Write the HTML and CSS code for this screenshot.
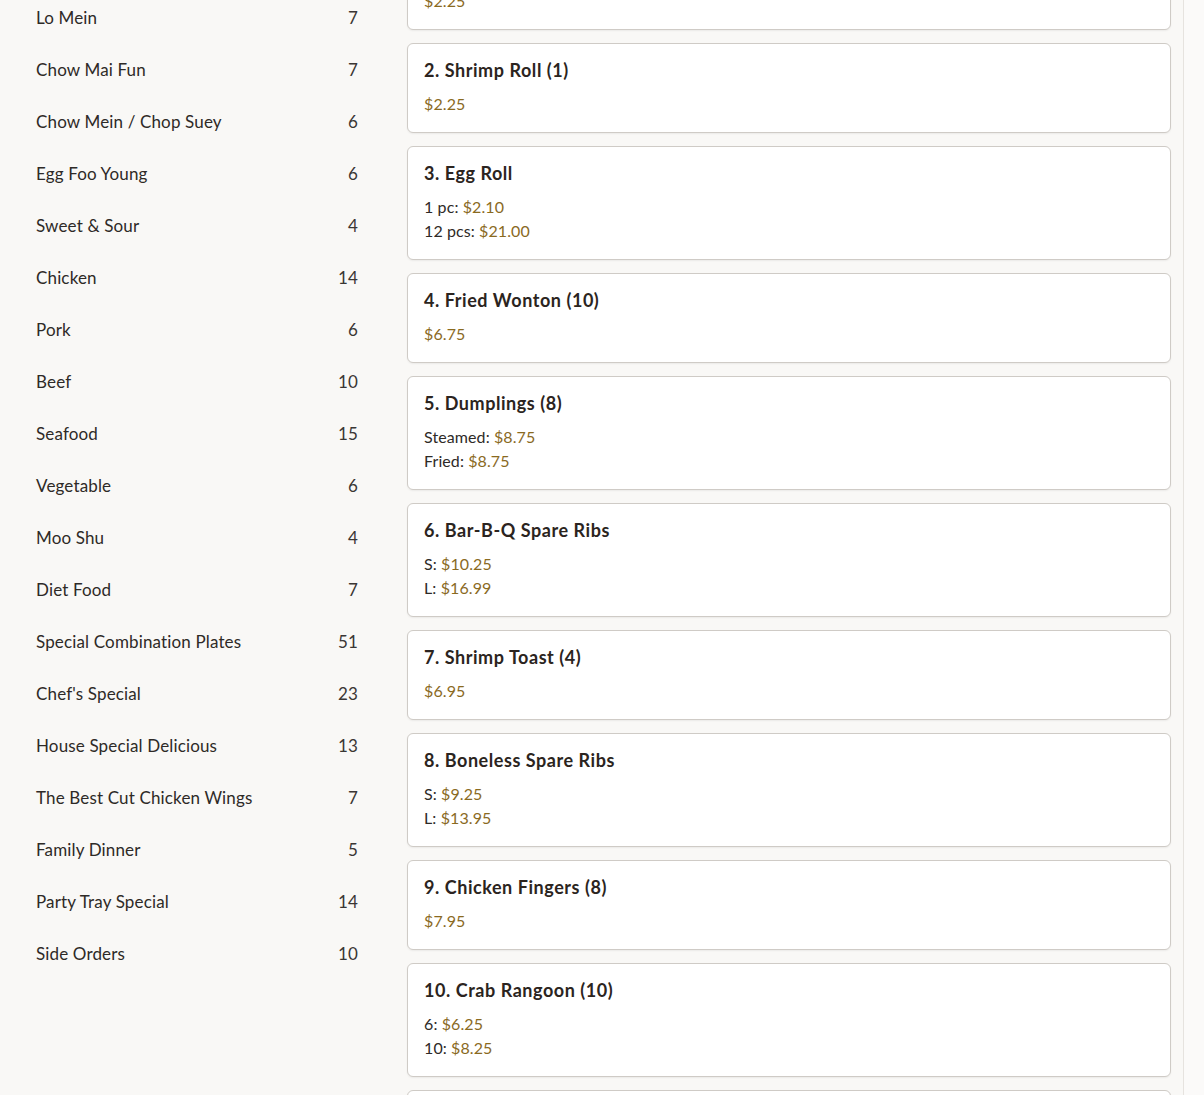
FILE: index.html
```html
<!DOCTYPE html>
<html lang="en">
<head>
<meta charset="utf-8">
<title>Menu</title>
<link rel="stylesheet" href="styles.css">
</head>
<body>
<div class="layout">
  <aside class="sidebar">
    <ul class="cats">
      <li class="cat"><span class="cat-name">Lo Mein</span><span class="cat-count">7</span></li>
      <li class="cat"><span class="cat-name">Chow Mai Fun</span><span class="cat-count">7</span></li>
      <li class="cat"><span class="cat-name">Chow Mein / Chop Suey</span><span class="cat-count">6</span></li>
      <li class="cat"><span class="cat-name">Egg Foo Young</span><span class="cat-count">6</span></li>
      <li class="cat"><span class="cat-name">Sweet &amp; Sour</span><span class="cat-count">4</span></li>
      <li class="cat"><span class="cat-name">Chicken</span><span class="cat-count">14</span></li>
      <li class="cat"><span class="cat-name">Pork</span><span class="cat-count">6</span></li>
      <li class="cat"><span class="cat-name">Beef</span><span class="cat-count">10</span></li>
      <li class="cat"><span class="cat-name">Seafood</span><span class="cat-count">15</span></li>
      <li class="cat"><span class="cat-name">Vegetable</span><span class="cat-count">6</span></li>
      <li class="cat"><span class="cat-name">Moo Shu</span><span class="cat-count">4</span></li>
      <li class="cat"><span class="cat-name">Diet Food</span><span class="cat-count">7</span></li>
      <li class="cat"><span class="cat-name">Special Combination Plates</span><span class="cat-count">51</span></li>
      <li class="cat"><span class="cat-name">Chef's Special</span><span class="cat-count">23</span></li>
      <li class="cat"><span class="cat-name">House Special Delicious</span><span class="cat-count">13</span></li>
      <li class="cat"><span class="cat-name">The Best Cut Chicken Wings</span><span class="cat-count">7</span></li>
      <li class="cat"><span class="cat-name">Family Dinner</span><span class="cat-count">5</span></li>
      <li class="cat"><span class="cat-name">Party Tray Special</span><span class="cat-count">14</span></li>
      <li class="cat"><span class="cat-name">Side Orders</span><span class="cat-count">10</span></li>
    </ul>
  </aside>
  <main class="main">
    <div class="items">
      <div class="card">
        <h3 class="title">1. Spring Roll (1)</h3>
        <div class="prices"><div class="price">$2.25</div></div>
      </div>
      <div class="card">
        <h3 class="title">2. Shrimp Roll (1)</h3>
        <div class="prices"><div class="price">$2.25</div></div>
      </div>
      <div class="card">
        <h3 class="title">3. Egg Roll</h3>
        <div class="prices">
          <div>1 pc: <span class="price">$2.10</span></div>
          <div>12 pcs: <span class="price">$21.00</span></div>
        </div>
      </div>
      <div class="card">
        <h3 class="title">4. Fried Wonton (10)</h3>
        <div class="prices"><div class="price">$6.75</div></div>
      </div>
      <div class="card">
        <h3 class="title">5. Dumplings (8)</h3>
        <div class="prices">
          <div>Steamed: <span class="price">$8.75</span></div>
          <div>Fried: <span class="price">$8.75</span></div>
        </div>
      </div>
      <div class="card">
        <h3 class="title">6. Bar-B-Q Spare Ribs</h3>
        <div class="prices">
          <div>S: <span class="price">$10.25</span></div>
          <div>L: <span class="price">$16.99</span></div>
        </div>
      </div>
      <div class="card">
        <h3 class="title">7. Shrimp Toast (4)</h3>
        <div class="prices"><div class="price">$6.95</div></div>
      </div>
      <div class="card">
        <h3 class="title">8. Boneless Spare Ribs</h3>
        <div class="prices">
          <div>S: <span class="price">$9.25</span></div>
          <div>L: <span class="price">$13.95</span></div>
        </div>
      </div>
      <div class="card">
        <h3 class="title">9. Chicken Fingers (8)</h3>
        <div class="prices"><div class="price">$7.95</div></div>
      </div>
      <div class="card">
        <h3 class="title">10. Crab Rangoon (10)</h3>
        <div class="prices">
          <div>6: <span class="price">$6.25</span></div>
          <div>10: <span class="price">$8.25</span></div>
        </div>
      </div>
      <div class="card">
        <h3 class="title">11. Teriyaki Chicken (4)</h3>
        <div class="prices"><div class="price">$7.25</div></div>
      </div>
    </div>
  </main>
  <div class="scrollbar"></div>
</div>
</body>
</html>
```

FILE: styles.css
```css
* { box-sizing: border-box; }
html, body {
  margin: 0;
  padding: 0;
  height: 100%;
  overflow: hidden;
}
body {
  background: #f9f8f6;
  font-family: "Lato", "Nunito", "Noto Sans", sans-serif;
  color: #2b2522;
}
.layout {
  display: flex;
  height: 1095px;
  overflow: hidden;
}
.sidebar {
  width: 383px;
  flex: none;
  padding: 0 12px 0 24px;
}
.cats {
  list-style: none;
  margin: -9px 0 0 0;
  padding: 0;
}
.cat {
  display: flex;
  justify-content: space-between;
  align-items: center;
  height: 52px;
  padding: 0 13px 0 12px;
  font-size: 17px;
  letter-spacing: 0.15px;
  color: #2e2a27;
}
.cat-count {
  color: #3a3634;
}
.main {
  flex: 1;
  min-width: 0;
  padding: 0 12px 0 24px;
}
.items {
  display: flex;
  flex-direction: column;
  gap: 13px;
  margin-top: -60px;
}
.card {
  background: #ffffff;
  border: 1px solid #cfcbc6;
  border-radius: 6px;
  padding: 16px;
  box-shadow: 0 1px 2px rgba(0, 0, 0, 0.06);
}
.title {
  margin: 0 0 12px 0;
  font-size: 18px;
  line-height: 20px;
  font-weight: 700;
  letter-spacing: 0.55px;
  color: #2b2420;
}
.prices {
  font-size: 16px;
  line-height: 24px;
  letter-spacing: 0.1px;
  color: #2e2a27;
}
.price {
  color: #8a6a1f;
}
.scrollbar {
  width: 21px;
  flex: none;
  border-left: 1px solid #e6e3df;
  background: #fbfaf9;
}
```
